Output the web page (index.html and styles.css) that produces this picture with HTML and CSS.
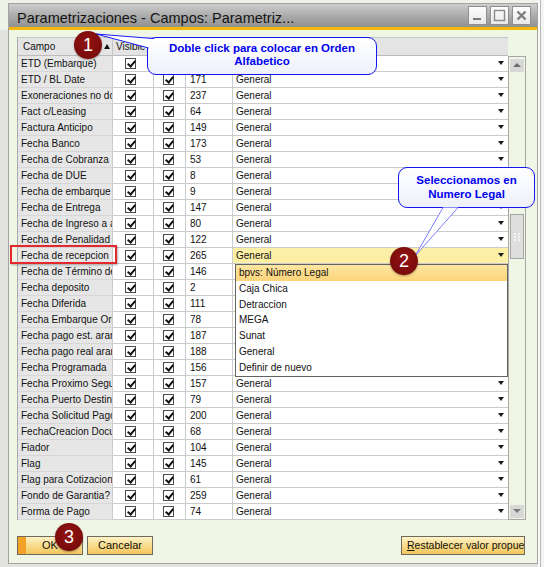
FILE: index.html
```html
<!DOCTYPE html>
<html lang="es">
<head>
<meta charset="utf-8">
<title>Parametrizaciones</title>
<link rel="stylesheet" href="styles.css">
</head>
<body>
<div class="screen">
  <div class="window">
    <div class="titlebar">
      <div class="title">Parametrizaciones - Campos: Parametriz...</div>
      <div class="tbtns">
        <div class="tbtn"><svg width="11" height="11" viewBox="0 0 11 11"><rect x="1" y="8" width="8" height="2" fill="#7a7a7a"/></svg></div>
        <div class="tbtn"><svg width="13" height="13" viewBox="0 0 13 13"><rect x="1.5" y="1.5" width="10" height="10" fill="none" stroke="#8a8a8a" stroke-width="1.4"/></svg></div>
        <div class="tbtn"><svg width="11" height="11" viewBox="0 0 11 11"><path d="M1.5 1.5 L9.5 9.5 M9.5 1.5 L1.5 9.5" stroke="#7d7d7d" stroke-width="2.4"/></svg></div>
      </div>
    </div>
    <div class="body">
      <div class="gridarea">
        <div class="grid">
          <div class="hdr">
            <div class="h hname">Campo<span class="sort"></span></div>
            <div class="h">Visible</div>
            <div class="h"></div>
            <div class="h"></div>
            <div class="h hcat"></div>
          </div>
          <div class="row"><div class="c name">ETD (Embarque)</div><div class="c"><i class="cb"></i></div><div class="c c3"><i class="cb"></i></div><div class="c num"></div><div class="c cat"></div></div>
          <div class="row"><div class="c name">ETD / BL Date</div><div class="c"><i class="cb"></i></div><div class="c c3"><i class="cb"></i></div><div class="c num">171</div><div class="c cat">General</div></div>
          <div class="row"><div class="c name">Exoneraciones no domiciliados</div><div class="c"><i class="cb"></i></div><div class="c c3"><i class="cb"></i></div><div class="c num">237</div><div class="c cat">General</div></div>
          <div class="row"><div class="c name">Fact c/Leasing</div><div class="c"><i class="cb"></i></div><div class="c c3"><i class="cb"></i></div><div class="c num">64</div><div class="c cat">General</div></div>
          <div class="row"><div class="c name">Factura Anticipo</div><div class="c"><i class="cb"></i></div><div class="c c3"><i class="cb"></i></div><div class="c num">149</div><div class="c cat">General</div></div>
          <div class="row"><div class="c name">Fecha Banco</div><div class="c"><i class="cb"></i></div><div class="c c3"><i class="cb"></i></div><div class="c num">173</div><div class="c cat">General</div></div>
          <div class="row"><div class="c name">Fecha de Cobranza</div><div class="c"><i class="cb"></i></div><div class="c c3"><i class="cb"></i></div><div class="c num">53</div><div class="c cat">General</div></div>
          <div class="row"><div class="c name">Fecha de DUE</div><div class="c"><i class="cb"></i></div><div class="c c3"><i class="cb"></i></div><div class="c num">8</div><div class="c cat">General</div></div>
          <div class="row"><div class="c name">Fecha de embarque</div><div class="c"><i class="cb"></i></div><div class="c c3"><i class="cb"></i></div><div class="c num">9</div><div class="c cat">General</div></div>
          <div class="row"><div class="c name">Fecha de Entrega</div><div class="c"><i class="cb"></i></div><div class="c c3"><i class="cb"></i></div><div class="c num">147</div><div class="c cat">General</div></div>
          <div class="row"><div class="c name">Fecha de Ingreso a almacén</div><div class="c"><i class="cb"></i></div><div class="c c3"><i class="cb"></i></div><div class="c num">80</div><div class="c cat">General</div></div>
          <div class="row"><div class="c name">Fecha de Penalidad</div><div class="c"><i class="cb"></i></div><div class="c c3"><i class="cb"></i></div><div class="c num">122</div><div class="c cat">General</div></div>
          <div class="row"><div class="c name">Fecha de recepcion</div><div class="c"><i class="cb"></i></div><div class="c c3"><i class="cb"></i></div><div class="c num">265</div><div class="c cat active">General</div></div>
          <div class="row"><div class="c name">Fecha de Término de contrato</div><div class="c"><i class="cb"></i></div><div class="c c3"><i class="cb"></i></div><div class="c num">146</div><div class="c cat"></div></div>
          <div class="row"><div class="c name">Fecha deposito</div><div class="c"><i class="cb"></i></div><div class="c c3"><i class="cb"></i></div><div class="c num">2</div><div class="c cat"></div></div>
          <div class="row"><div class="c name">Fecha Diferida</div><div class="c"><i class="cb"></i></div><div class="c c3"><i class="cb"></i></div><div class="c num">111</div><div class="c cat"></div></div>
          <div class="row"><div class="c name">Fecha Embarque Origen</div><div class="c"><i class="cb"></i></div><div class="c c3"><i class="cb"></i></div><div class="c num">78</div><div class="c cat"></div></div>
          <div class="row"><div class="c name">Fecha pago est. arancel</div><div class="c"><i class="cb"></i></div><div class="c c3"><i class="cb"></i></div><div class="c num">187</div><div class="c cat"></div></div>
          <div class="row"><div class="c name">Fecha pago real arancel</div><div class="c"><i class="cb"></i></div><div class="c c3"><i class="cb"></i></div><div class="c num">188</div><div class="c cat"></div></div>
          <div class="row"><div class="c name">Fecha Programada</div><div class="c"><i class="cb"></i></div><div class="c c3"><i class="cb"></i></div><div class="c num">156</div><div class="c cat"></div></div>
          <div class="row"><div class="c name">Fecha Proximo Seguimiento</div><div class="c"><i class="cb"></i></div><div class="c c3"><i class="cb"></i></div><div class="c num">157</div><div class="c cat">General</div></div>
          <div class="row"><div class="c name">Fecha Puerto Destino</div><div class="c"><i class="cb"></i></div><div class="c c3"><i class="cb"></i></div><div class="c num">79</div><div class="c cat">General</div></div>
          <div class="row"><div class="c name">Fecha Solicitud Pago</div><div class="c"><i class="cb"></i></div><div class="c c3"><i class="cb"></i></div><div class="c num">200</div><div class="c cat">General</div></div>
          <div class="row"><div class="c name">FechaCreacion Documento</div><div class="c"><i class="cb"></i></div><div class="c c3"><i class="cb"></i></div><div class="c num">68</div><div class="c cat">General</div></div>
          <div class="row"><div class="c name">Fiador</div><div class="c"><i class="cb"></i></div><div class="c c3"><i class="cb"></i></div><div class="c num">104</div><div class="c cat">General</div></div>
          <div class="row"><div class="c name">Flag</div><div class="c"><i class="cb"></i></div><div class="c c3"><i class="cb"></i></div><div class="c num">145</div><div class="c cat">General</div></div>
          <div class="row"><div class="c name">Flag para Cotizacion</div><div class="c"><i class="cb"></i></div><div class="c c3"><i class="cb"></i></div><div class="c num">61</div><div class="c cat">General</div></div>
          <div class="row"><div class="c name">Fondo de Garantia?</div><div class="c"><i class="cb"></i></div><div class="c c3"><i class="cb"></i></div><div class="c num">259</div><div class="c cat">General</div></div>
          <div class="row"><div class="c name">Forma de Pago</div><div class="c"><i class="cb"></i></div><div class="c c3"><i class="cb"></i></div><div class="c num">74</div><div class="c cat">General</div></div>
        </div>
        <div class="vscroll">
          <div class="sbtn up"></div>
          <div class="thumb"><svg width="6" height="8" viewBox="0 0 6 8"><g fill="#f4f4f4"><rect x="0" y="0" width="2" height="2"/><rect x="4" y="0" width="2" height="2"/><rect x="0" y="3" width="2" height="2"/><rect x="4" y="3" width="2" height="2"/><rect x="0" y="6" width="2" height="2"/><rect x="4" y="6" width="2" height="2"/></g></svg></div>
          <div class="sbtn down"></div>
        </div>
      </div>
      <div class="actions">
        <div class="btn ok">OK</div>
        <div class="btn">Cancelar</div>
        <div class="btn reset"><u>R</u>establecer valor propuesto</div>
      </div>
    </div>
  </div>

  <div class="dd">
    <div class="sel">bpvs: Número Legal</div>
    <div>Caja Chica</div>
    <div>Detraccion</div>
    <div>MEGA</div>
    <div>Sunat</div>
    <div>General</div>
    <div>Definir de nuevo</div>
  </div>

  <div class="mark"></div>

  <div class="bubble b1">Doble click para colocar en Orden<br>Alfabetico</div>
  <div class="bubble b2">Seleccionamos en<br>Numero Legal</div>

  <svg class="ptrs" width="544" height="567" viewBox="0 0 544 567">
    <polygon points="96,34 154,38.6 148.6,48" fill="#ffffff"/>
    <path d="M96 34 L154 38.6 M96 34 L148.6 48" stroke="#1a1aff" stroke-width="1" fill="none"/>
    <polygon points="415,256 443,207.6 458,207.6" fill="#ffffff"/>
    <path d="M415 256 L443 207.6 M415 256 L458 207.6" stroke="#7a7aff" stroke-width="1" fill="none"/>
  </svg>

  <div class="badge n1">1</div>
  <div class="badge n2">2</div>
  <div class="badge n3">3</div>
</div>
</body>
</html>
```

FILE: styles.css
```css
* { box-sizing: border-box; }
body { margin: 0; font-family: "Liberation Sans", Arial, sans-serif; }

.screen {
  position: relative;
  width: 544px;
  height: 567px;
  overflow: hidden;
  background: linear-gradient(#eef3e7 0 30px, #e2e3e0 30px);
}
.screen::after {
  content: "";
  position: absolute;
  right: 0;
  top: 0;
  width: 6px;
  height: 567px;
  background: linear-gradient(90deg, #fafafa 0 2px, #b8b8b8 2px 3px, #f4f4f4 3px);
}

.window {
  margin: 3px 0 0 8px;
  width: 530px;
  height: 561px;
  border: 1px solid #a3a3a3;
  display: flex;
  flex-direction: column;
  background: #eff6e6;
}

.titlebar {
  height: 26px;
  flex: none;
  border-bottom: 3px solid #f4b70c;
  background: linear-gradient(#cdcdcd, #a9a9a9 55%, #919191);
  display: flex;
  padding: 0 6px 0 8px;
}
.title {
  flex: 1;
  margin-top: 6px;
  font-size: 14.5px;
  line-height: 17px;
  color: #141414;
  white-space: nowrap;
}
.tbtns { display: flex; gap: 3px; margin-top: 2px; }
.tbtn {
  width: 19px;
  height: 19px;
  border: 1px solid #8f8f8f;
  background: linear-gradient(#fdfdfd, #e8e8e8);
  display: flex;
  align-items: center;
  justify-content: center;
}

.body {
  flex: 1;
  display: flex;
  flex-direction: column;
  padding: 7px 11px 0 8px;
}
.gridarea { display: flex; }

.grid {
  width: 491px;
  border-left: 1px solid #a9a9a9;
  font-size: 10px;
  color: #111;
}
.hdr, .row {
  display: grid;
  grid-template-columns: 95px 41px 32px 47px 275px;
}
.hdr {
  height: 19px;
  border-top: 1px solid #c6c6c6;
  background: #e4e4e4;
}
.h {
  border-right: 1px solid #c6c6c6;
  border-bottom: 1px solid #bcbcbc;
  padding-left: 3px;
  line-height: 17px;
  white-space: nowrap;
  overflow: hidden;
  position: relative;
}
.hname { padding-left: 5px; }
.hcat { border-right: none; }
.sort {
  position: absolute;
  right: 2px;
  top: 6px;
  border-left: 3.5px solid transparent;
  border-right: 3.5px solid transparent;
  border-bottom: 5px solid #111;
}

.row { height: 16px; }
.c {
  border-right: 1px solid #cbcbcb;
  border-bottom: 1px solid #cbcbcb;
  background: #fff;
  line-height: 15px;
  white-space: nowrap;
  overflow: hidden;
  position: relative;
}
.name { background: #e6e6e6; padding-left: 3px; border-bottom-color: #d6d6d6; }
.num { padding-left: 4px; }
.cat { padding-left: 3px; border-right: none; }
.cat::after {
  content: "";
  position: absolute;
  right: 4px;
  top: 5px;
  border-left: 3.5px solid transparent;
  border-right: 3.5px solid transparent;
  border-top: 4px solid #1c1c1c;
}
.cat.active { background: #fdf0a6; }

.cb {
  display: block;
  width: 11px;
  height: 11px;
  margin: 2px 0 0 12px;
  border: 1px solid #4c4c4c;
  background: #fff;
  position: relative;
}
.c3 .cb { margin-left: 9px; }
.cb::after {
  content: "";
  position: absolute;
  left: 3px;
  top: 0;
  width: 3px;
  height: 6px;
  border-right: 2px solid #111;
  border-bottom: 2px solid #111;
  transform: rotate(40deg);
}

.vscroll {
  width: 18px;
  height: 464px;
  margin-top: 19px;
  border: 1px solid #a6a6a6;
  display: flex;
  flex-direction: column;
  padding: 0 1px 0 1px;
}
.sbtn {
  width: 14px;
  height: 13px;
  background: #d8d8d8;
  position: relative;
}
.up { margin-top: 2px; }
.down { margin-top: auto; margin-bottom: 1px; }
.sbtn::after {
  content: "";
  position: absolute;
  left: 3px;
  top: 4px;
  border-left: 4px solid transparent;
  border-right: 4px solid transparent;
}
.up::after { border-bottom: 4px solid #6c6c6c; }
.down::after { border-top: 4px solid #7a7a7a; }
.thumb {
  margin-top: 142px;
  width: 14px;
  height: 45px;
  border: 1px solid #a4a4a4;
  background: #dedede;
  display: flex;
  align-items: center;
  justify-content: center;
}

.actions {
  display: flex;
  gap: 4px;
  margin-top: 16px;
}
.btn {
  width: 66px;
  height: 19px;
  border: 1px solid #6e6a5e;
  background: linear-gradient(#fdf2c8, #f8da86 55%, #f3c65c);
  font-size: 11px;
  line-height: 17px;
  text-align: center;
  color: #111;
  white-space: nowrap;
  overflow: hidden;
}
.ok {
  text-align: left;
  padding-left: 24px;
  box-shadow: inset 8px 0 0 #f1a227;
}
.reset {
  width: 124px;
  margin-left: auto;
  margin-right: 1px;
  text-align: left;
  padding-left: 5px;
  font-size: 10.5px;
}

.dd {
  position: absolute;
  left: 235px;
  top: 264px;
  width: 273px;
  border: 1px solid #636363;
  background: #fff;
  font-size: 10px;
  color: #111;
}
.dd div { height: 15.8px; line-height: 15.8px; padding-left: 3px; }
.dd .sel { background: linear-gradient(#fde6a1, #fcd47b); }

.mark {
  position: absolute;
  left: 10px;
  top: 245px;
  width: 107px;
  height: 19px;
  border: 2px solid #e4282c;
  box-shadow: 1px 1px 2px rgba(0,0,0,0.3);
}

.bubble {
  position: absolute;
  border: 1.5px solid #1414f0;
  border-radius: 9px;
  background: linear-gradient(#ffffff, #eef1fb);
  color: #0000ee;
  font-weight: bold;
  font-size: 11.5px;
  text-align: center;
}
.b1 { left: 147px; top: 37px; width: 230px; height: 38px; padding-top: 4px; line-height: 13px; }
.b2 { left: 398px; top: 167px; width: 137px; height: 41px; padding-top: 5px; line-height: 14px; }

.ptrs { position: absolute; left: 0; top: 0; pointer-events: none; }

.badge {
  position: absolute;
  width: 28px;
  height: 28px;
  border-radius: 50%;
  background: radial-gradient(circle at 50% 40%, #931313, #700808);
  box-shadow: 0 1px 2px rgba(0,0,0,0.35);
  color: #fff;
  font-size: 18px;
  line-height: 28px;
  text-align: center;
}
.n1 { left: 74px; top: 31px; }
.n2 { left: 390px; top: 247px; }
.n3 { left: 55px; top: 523px; }
```
